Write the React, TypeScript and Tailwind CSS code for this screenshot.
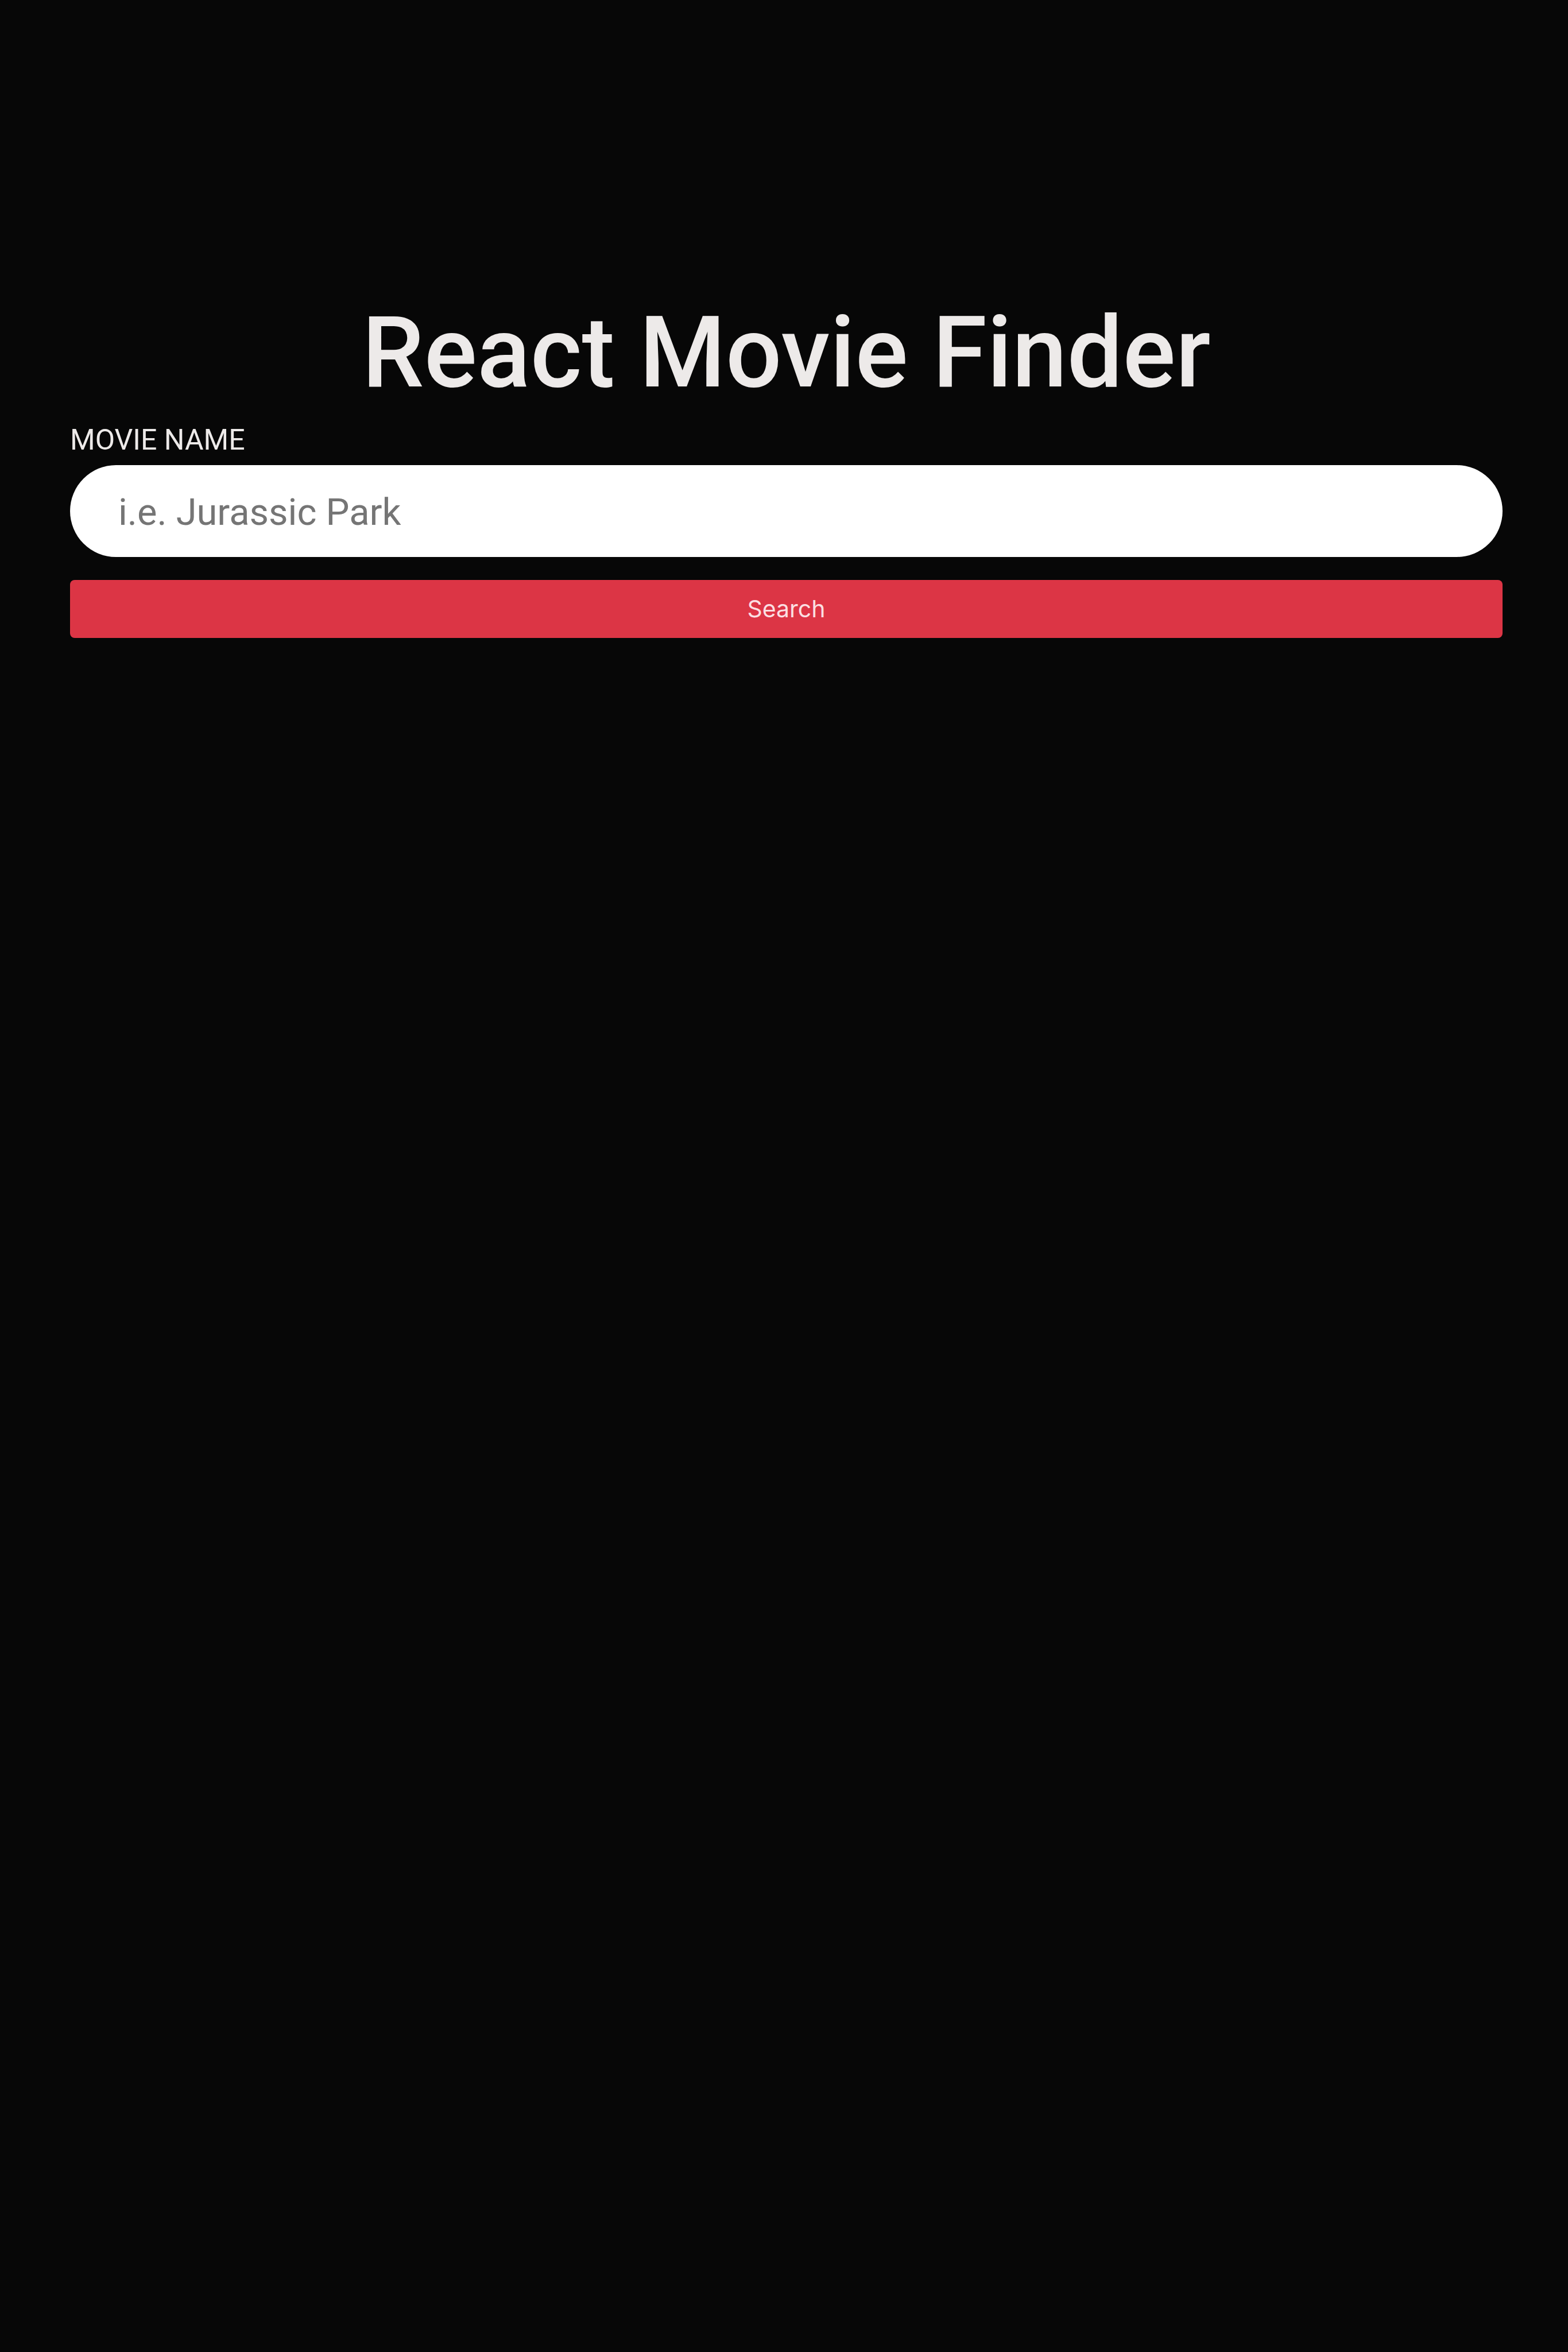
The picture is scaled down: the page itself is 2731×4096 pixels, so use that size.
import { useState, type FormEvent } from "react";

export default function App() {
  const [query, setQuery] = useState("");

  function handleSubmit(event: FormEvent<HTMLFormElement>) {
    event.preventDefault();
  }

  return (
    <main className="min-h-screen bg-[#070707] pt-[510px] pr-[114px] pl-[122px] font-['Roboto',sans-serif] text-[#edeae9]">
      <h1 className="text-center text-[172px] leading-[208px] font-medium">React Movie Finder</h1>
      <form onSubmit={handleSubmit} className="flex flex-col">
        <label htmlFor="movie-name" className="mt-4 text-[50px] leading-[64px] uppercase">
          Movie Name
        </label>
        <input
          id="movie-name"
          type="text"
          value={query}
          onChange={(event) => setQuery(event.target.value)}
          placeholder="i.e. Jurassic Park"
          className="mt-3 h-40 w-full rounded-full bg-white px-[84px] pt-1 text-[65px] text-[#212529] outline-none placeholder:text-[#757575]"
        />
        <button
          type="submit"
          className="mt-10 h-[101px] w-full rounded-lg bg-[#dc3545] font-['Inter',sans-serif] text-[41px] text-[#fbdfe2]"
        >
          Search
        </button>
      </form>
    </main>
  );
}
